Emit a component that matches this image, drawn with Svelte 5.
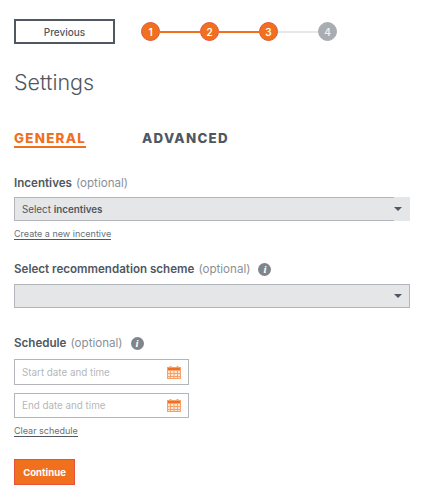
<script>
    const steps = [
        { n: 1, done: true },
        { n: 2, done: true },
        { n: 3, done: true },
        { n: 4, done: false }
    ];
</script>

<div class="page">
    <div class="top">
        <button class="prev">Previous</button>
        <div class="steps">
            {#each steps as step, i}
                {#if i > 0}
                    <span class="line" class:on={step.done}></span>
                {/if}
                <span class="dot" class:on={step.done}>{step.n}</span>
            {/each}
        </div>
    </div>

    <h1>Settings</h1>

    <div class="tabs">
        <span class="tab active">GENERAL</span>
        <span class="tab">ADVANCED</span>
    </div>

    <div class="label first"><b>Incentives</b> (optional)</div>
    <div class="select open">
        <span>Select <b>incentives</b></span>
        <i class="caret"></i>
    </div>
    <a class="link" href="#new">Create a new incentive</a>

    <div class="label second">
        <b>Select recommendation scheme</b> (optional)
        <span class="info">i</span>
    </div>
    <div class="select">
        <span></span>
        <i class="caret"></i>
    </div>

    <div class="label third">
        <b>Schedule</b> (optional)
        <span class="info">i</span>
    </div>
    <div class="date">
        <span>Start date and time</span>
        {@render calendar()}
    </div>
    <div class="date second-date">
        <span>End date and time</span>
        {@render calendar()}
    </div>
    <a class="link clear" href="#clear">Clear schedule</a>

    <button class="continue">Continue</button>
</div>

{#snippet calendar()}
    <svg width="14" height="13" viewBox="0 0 14 13">
        <rect x="0" y="1" width="14" height="12" fill="#fde6d5" />
        <rect x="0" y="1" width="14" height="3.5" fill="#f26f21" />
        <rect x="2.5" y="0" width="2" height="2" fill="#f9a66c" />
        <rect x="9.5" y="0" width="2" height="2" fill="#f9a66c" />
        <path d="M3.5 4.5V13M7 4.5V13M10.5 4.5V13M0 7.5H14M0 10.5H14" stroke="#f6a168" stroke-width="1" fill="none" />
        <rect x="0.5" y="1.5" width="13" height="11" fill="none" stroke="#f6a168" stroke-width="1" />
    </svg>
{/snippet}

<style>
    :global(body) {
        background: #fff;
        font-family: Inter, "Liberation Sans", sans-serif;
        color: #4f5761;
    }

    .page {
        width: 396px;
        padding: 19px 14px 0;
    }

    .top {
        display: flex;
        align-items: center;
        gap: 26px;
    }

    .prev {
        width: 101px;
        height: 25px;
        padding: 0;
        border: 2px solid #4f5761;
        background: #fff;
        color: #4f5761;
        font: 500 10px Inter, sans-serif;
    }

    .steps {
        display: flex;
        align-items: center;
    }

    .dot {
        width: 19px;
        height: 19px;
        box-sizing: border-box;
        border-radius: 50%;
        border: 1px solid #a9adb2;
        background: #a9adb3;
        color: #eceef0;
        font-size: 10px;
        font-weight: 600;
        display: flex;
        align-items: center;
        justify-content: center;
    }

    .dot.on {
        background: #f0701e;
        border-color: #e5533a;
        color: #fff;
    }

    .line {
        width: 40px;
        height: 2px;
        background: #e6e7e9;
    }

    .line.on {
        background: #f0701e;
    }

    h1 {
        margin: 24px 0 0;
        font-size: 21.5px;
        line-height: 28px;
        font-weight: 300;
    }

    .tabs {
        display: flex;
        gap: 56px;
        margin-top: 34px;
    }

    .tab {
        font-size: 13.3px;
        line-height: 16px;
        font-weight: 800;
        letter-spacing: 1.3px;
    }

    .tab.active {
        color: #f0701e;
        border-bottom: 2px solid #f0701e;
    }

    .label {
        font-size: 11.6px;
        line-height: 16px;
        color: #8a9097;
        display: flex;
        align-items: center;
        gap: 4px;
    }

    .label b {
        color: #4f5761;
        font-weight: 600;
    }

    .first {
        margin-top: 27px;
    }

    .second {
        margin-top: 21px;
    }

    .third {
        margin-top: 27px;
    }

    .info {
        width: 13px;
        height: 13px;
        margin-left: 4px;
        border-radius: 50%;
        background: #7f858c;
        color: #fff;
        font: italic 700 11px "Liberation Serif", serif;
        display: flex;
        align-items: center;
        justify-content: center;
    }

    .select {
        position: relative;
        height: 24px;
        margin-top: 7px;
        padding: 0 7px;
        box-sizing: border-box;
        background: #e5e6e8;
        border: 1px solid #b2b5b9;
        display: flex;
        align-items: center;
        justify-content: space-between;
        font-size: 9.8px;
        color: #4f5761;
    }

    .select.open {
        margin-top: 6px;
    }

    /* the arrow cell covers the border on this one */
    .select.open::after {
        content: '';
        position: absolute;
        top: -1px;
        right: -1px;
        bottom: -1px;
        width: 16px;
        background: #e5e6e8;
    }

    .select b {
        font-weight: 600;
    }

    .caret {
        position: relative;
        z-index: 1;
        width: 0;
        height: 0;
        border-left: 4px solid transparent;
        border-right: 4px solid transparent;
        border-top: 4px solid #4f5761;
    }

    .link {
        display: table;
        margin-top: 7px;
        font-size: 9px;
        line-height: 11px;
        color: #6a7179;
        text-decoration: none;
        border-bottom: 1px solid #4f5761;
    }

    .date {
        width: 175px;
        height: 26px;
        margin-top: 8px;
        padding: 0 7px;
        box-sizing: border-box;
        border: 1px solid #b2b5b9;
        display: flex;
        align-items: center;
        justify-content: space-between;
        font-size: 9.8px;
        color: #b4b8bc;
    }

    .second-date {
        height: 25px;
    }

    .clear {
        margin-top: 7px;
    }

    .continue {
        display: block;
        width: 61px;
        height: 26px;
        margin-top: 22px;
        padding: 0;
        background: #f0701e;
        border: 1px solid #e5533a;
        color: #fff;
        font: 700 9.6px Inter, sans-serif;
    }
</style>
